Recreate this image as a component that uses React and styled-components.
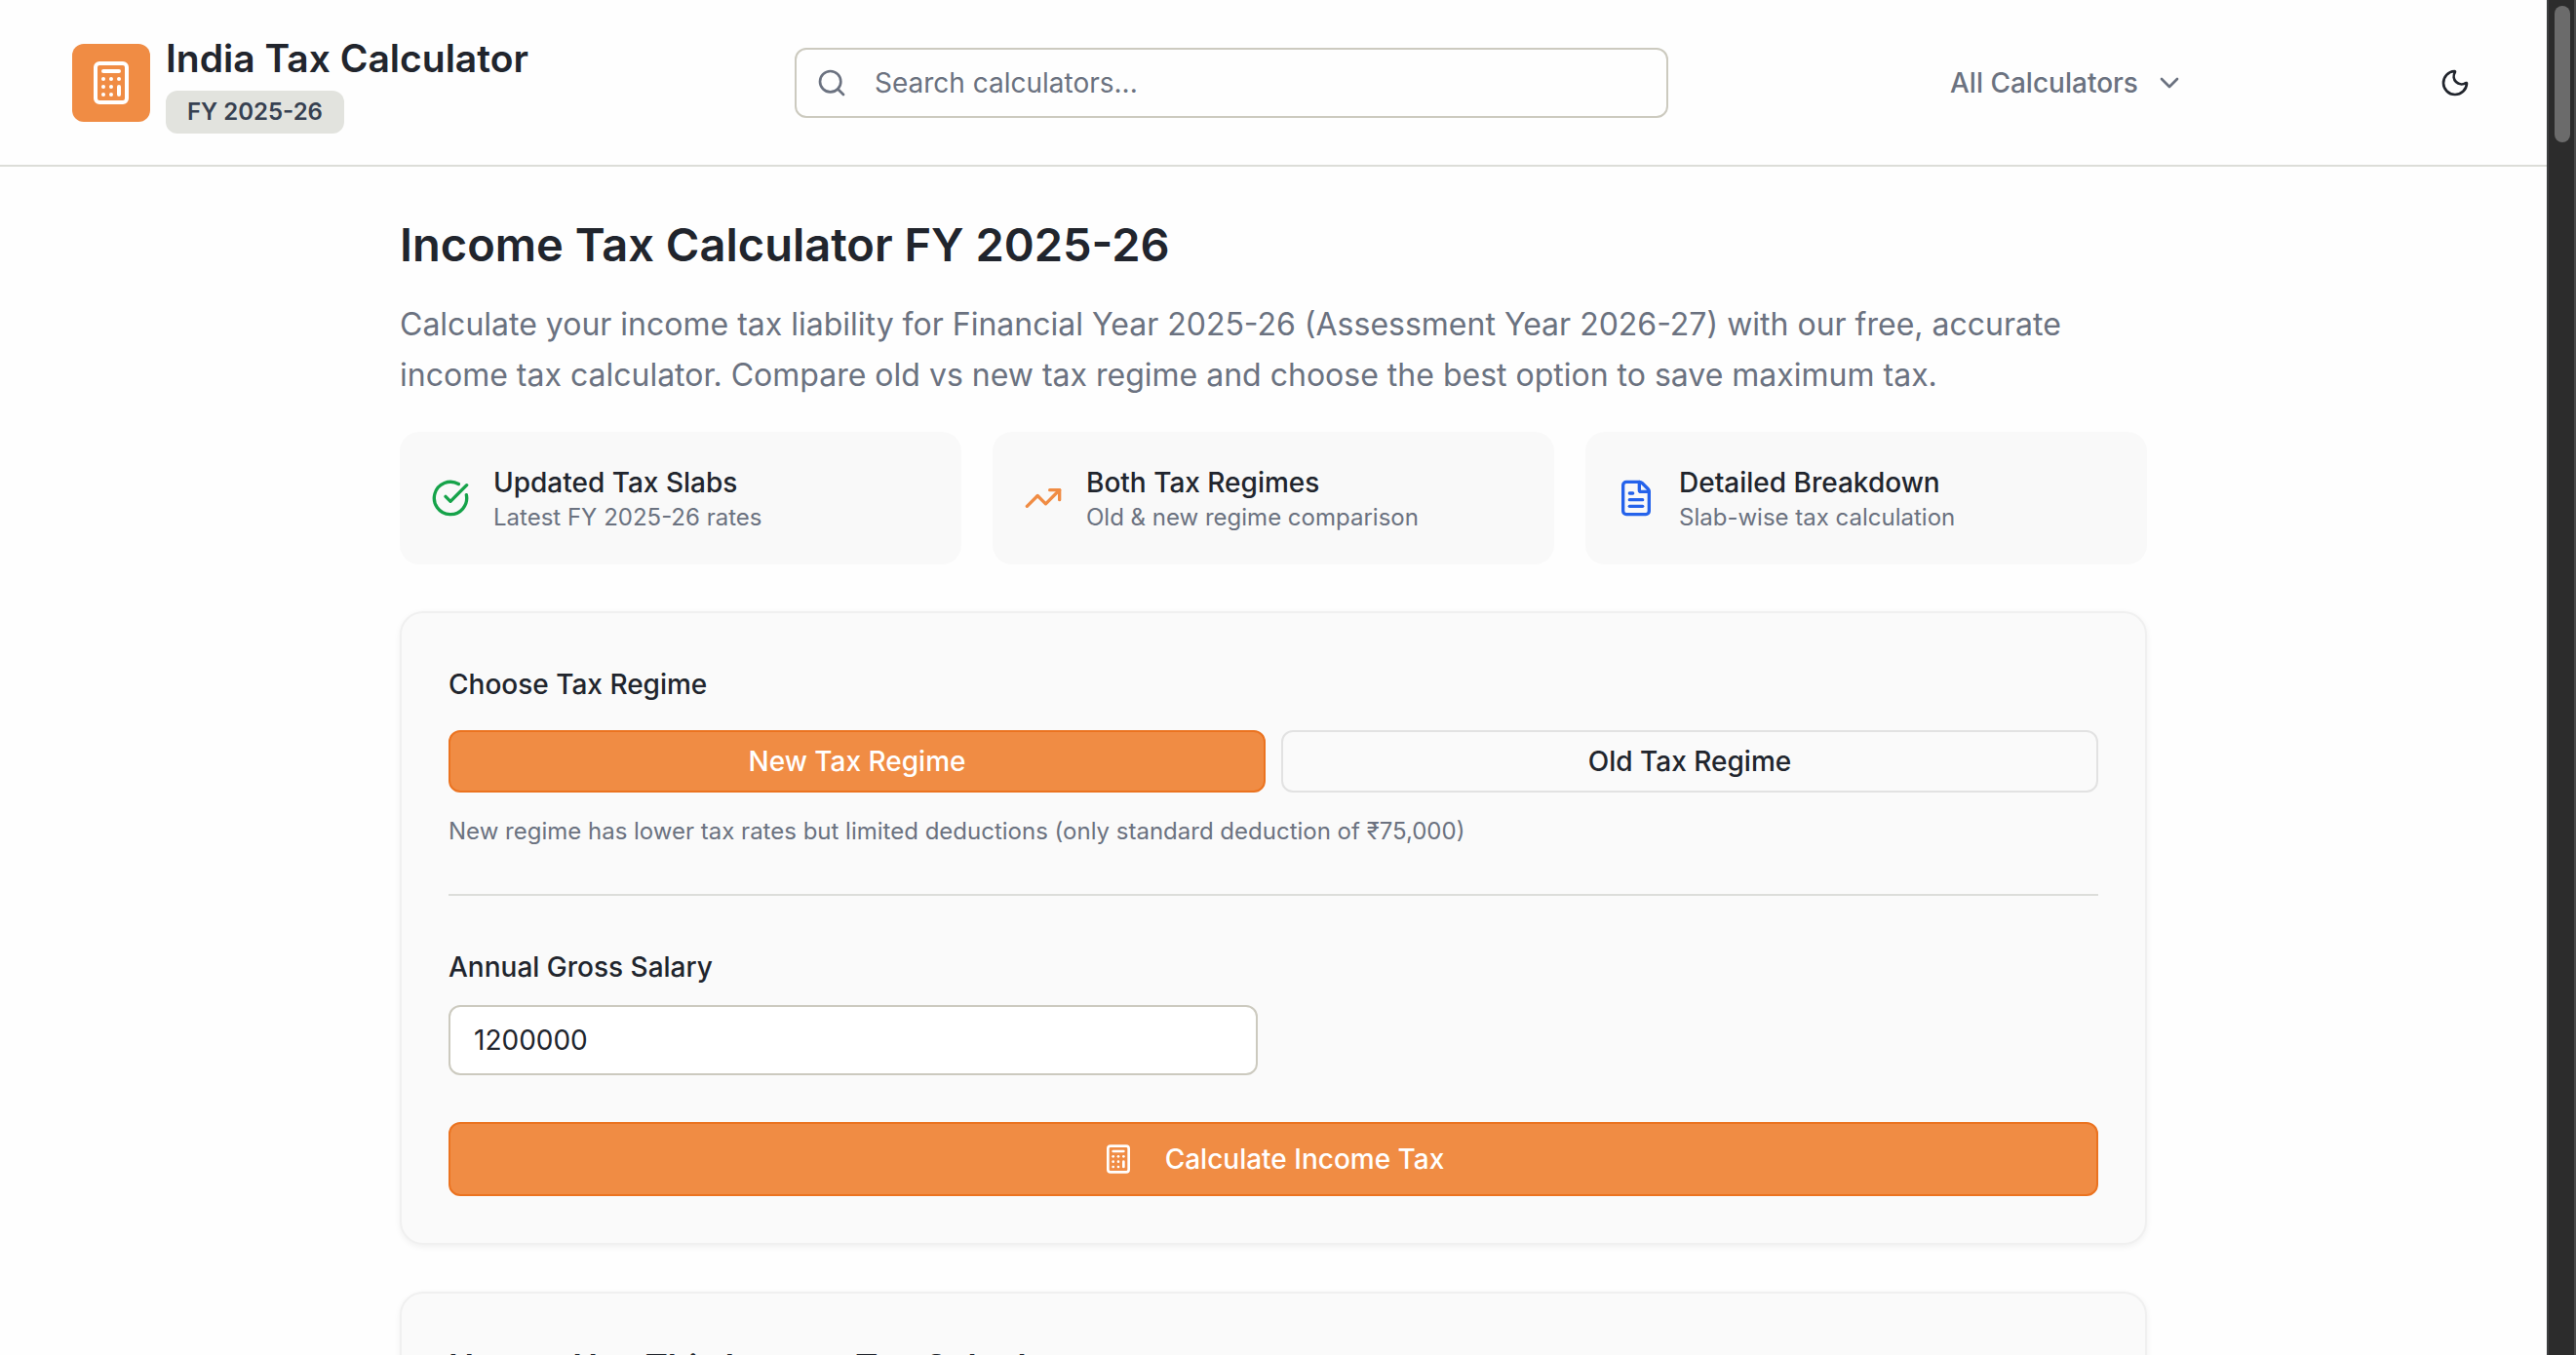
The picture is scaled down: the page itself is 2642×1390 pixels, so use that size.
import React, { useState } from 'react';
import styled, { createGlobalStyle } from 'styled-components';
import {
  Calculator,
  ChevronDown,
  CircleCheckBig,
  FileText,
  Moon,
  Search,
  TrendingUp,
} from 'lucide-react';

const GlobalStyle = createGlobalStyle`
  * {
    box-sizing: border-box;
  }

  html,
  body,
  #root {
    height: 100%;
  }

  body {
    margin: 0;
    overflow: hidden;
    background: #fefefe;
    color: #21252d;
    font-family: Inter, "Liberation Sans", sans-serif;
    font-size: 28px;
  }

  h1,
  h2,
  h3,
  p {
    margin: 0;
  }

  button,
  input {
    font: inherit;
    color: inherit;
  }
`;

const Window = styled.div`
  display: flex;
  height: 100%;
`;

const Page = styled.div`
  flex: 1;
  min-width: 0;
  overflow: hidden;
`;

const ScrollTrack = styled.div`
  flex: 0 0 30px;
  padding: 6px 4px 0 6px;
  background: #2c2c2c;
  border-left: 2px solid #3d3f40;
  border-right: 2px solid #4a4a4a;
`;

const ScrollThumb = styled.div`
  height: 140px;
  border-radius: 8px;
  background: #6b6b6b;
`;

const Header = styled.header`
  display: flex;
  align-items: center;
  justify-content: space-between;
  padding: 33px 74px 32px;
  border-bottom: 2px solid #dcddd8;
`;

const Brand = styled.a`
  display: flex;
  align-items: center;
  gap: 16px;
  color: inherit;
  text-decoration: none;
`;

const Logo = styled.span`
  display: flex;
  align-items: center;
  justify-content: center;
  width: 80px;
  height: 80px;
  border-radius: 12px;
  background: #f08c44;
  color: #fff;
`;

const BrandText = styled.span`
  display: flex;
  flex-direction: column;
  align-items: flex-start;
  gap: 6px;
`;

const BrandName = styled.span`
  font-size: 39px;
  font-weight: 600;
  line-height: 54px;
`;

const Badge = styled.span`
  padding: 0 22px;
  border-radius: 12px;
  background: #e2e3de;
  color: #374151;
  font-size: 24px;
  font-weight: 600;
  line-height: 44px;
`;

const SearchBox = styled.label`
  display: flex;
  align-items: center;
  flex: 0 1 896px;
  gap: 28px;
  height: 72px;
  padding: 0 20px;
  border: 2px solid #cccabf;
  border-radius: 12px;
  background: #fefefe;
  color: #6b7280;
`;

const SearchInput = styled.input`
  flex: 1;
  min-width: 0;
  padding: 0;
  border: 0;
  outline: 0;
  background: none;

  &::placeholder {
    color: #6b7280;
    opacity: 1;
  }
`;

const HeaderActions = styled.div`
  display: flex;
  align-items: center;
  justify-content: space-between;
  flex: 0 1 554px;
`;

const MenuButton = styled.button`
  display: flex;
  align-items: center;
  gap: 16px;
  padding: 16px;
  border: 0;
  background: none;
  color: #6b7280;
  font-weight: 500;
  cursor: pointer;
`;

const IconButton = styled.button`
  display: flex;
  padding: 4px;
  border: 0;
  background: none;
  cursor: pointer;
`;

const Main = styled.main`
  max-width: 1792px;
  margin: 0 auto;
  padding: 48px 0;
`;

const Title = styled.h1`
  margin-bottom: 24px;
  font-size: 47px;
  font-weight: 600;
  line-height: 64px;
`;

const Lead = styled.p`
  margin-bottom: 32px;
  color: #6b7280;
  font-size: 32px;
  line-height: 52px;
`;

const Features = styled.section`
  display: grid;
  grid-template-columns: repeat(3, 1fr);
  gap: 32px;
  margin-bottom: 48px;
`;

const Feature = styled.div`
  display: flex;
  align-items: center;
  gap: 24px;
  padding: 32px;
  border-radius: 20px;
  background: #f9f9f9;

  svg {
    color: ${props => props.$color};
  }
`;

const FeatureTitle = styled.h3`
  font-size: 28px;
  font-weight: 500;
  line-height: 40px;
`;

const FeatureText = styled.p`
  color: #6b7280;
  font-size: 24px;
  line-height: 32px;
`;

const Card = styled.section`
  margin-bottom: 48px;
  padding: 48px;
  border: 2px solid #f0f0f0;
  border-radius: 24px;
  background: #fafafa;
  box-shadow: 0 2px 6px rgba(0, 0, 0, 0.06);
`;

const Legend = styled.h2`
  margin-bottom: 22px;
  font-size: 28px;
  font-weight: 500;
  line-height: 50px;
`;

const Choices = styled.div`
  display: grid;
  grid-template-columns: 1fr 1fr;
  gap: 16px;
`;

const Button = styled.button`
  display: flex;
  align-items: center;
  justify-content: center;
  gap: 32px;
  width: 100%;
  height: ${props => (props.$large ? 76 : 64)}px;
  border: 2px solid ${props => (props.$primary ? '#eb7320' : '#e2e2e2')};
  border-radius: 12px;
  background: ${props => (props.$primary ? '#f08c44' : '#fafafa')};
  color: ${props => (props.$primary ? '#fff' : '#21252d')};
  font-weight: 500;
  cursor: pointer;
`;

const Hint = styled.p`
  margin-top: 16px;
  color: #6b7280;
  font-size: 24px;
  line-height: 48px;
`;

const Divider = styled.hr`
  margin: 40px 0 48px;
  border: 0;
  border-top: 2px solid #dcddda;
`;

const Fields = styled.div`
  display: grid;
  grid-template-columns: 1fr 1fr;
  gap: 32px;
  margin-bottom: 48px;
`;

const Field = styled.div`
  display: flex;
  flex-direction: column;
  gap: 14px;
`;

const FieldLabel = styled.label`
  font-weight: 500;
  line-height: 50px;
`;

const TextInput = styled.input`
  height: 72px;
  padding: 0 24px;
  border: 2px solid #cccabf;
  border-radius: 12px;
  background: #fff;
`;

const CardTitle = styled.h2`
  font-size: 35px;
  font-weight: 600;
  line-height: 54px;
`;

const features = [
  { icon: CircleCheckBig, color: '#16a34a', title: 'Updated Tax Slabs', text: 'Latest FY 2025-26 rates' },
  { icon: TrendingUp, color: '#f08c44', title: 'Both Tax Regimes', text: 'Old & new regime comparison' },
  { icon: FileText, color: '#2563eb', title: 'Detailed Breakdown', text: 'Slab-wise tax calculation' },
];

const hints = {
  new: 'New regime has lower tax rates but limited deductions (only standard deduction of ₹75,000)',
  old: 'Old regime has higher tax rates but allows more deductions',
};

const App = () => {
  const [regime, setRegime] = useState('new');
  const [salary, setSalary] = useState('1200000');

  return (
    <Window>
      <GlobalStyle />
      <Page>
        <Header>
          <Brand href="#">
            <Logo>
              <Calculator size={48} />
            </Logo>
            <BrandText>
              <BrandName>India Tax Calculator</BrandName>
              <Badge>FY 2025-26</Badge>
            </BrandText>
          </Brand>
          <SearchBox>
            <Search size={32} />
            <SearchInput type="text" aria-label="Search calculators" placeholder="Search calculators..." />
          </SearchBox>
          <HeaderActions>
            <MenuButton type="button">
              All Calculators
              <ChevronDown size={32} />
            </MenuButton>
            <IconButton type="button" aria-label="Toggle theme">
              <Moon size={32} />
            </IconButton>
          </HeaderActions>
        </Header>

        <Main>
          <Title>Income Tax Calculator FY 2025-26</Title>
          <Lead>
            Calculate your income tax liability for Financial Year 2025-26 (Assessment Year 2026-27) with our
            free, accurate income tax calculator. Compare old vs new tax regime and choose the best option to
            save maximum tax.
          </Lead>

          <Features>
            {features.map(({ icon: Icon, color, title, text }) => (
              <Feature key={title} $color={color}>
                <Icon size={40} />
                <div>
                  <FeatureTitle>{title}</FeatureTitle>
                  <FeatureText>{text}</FeatureText>
                </div>
              </Feature>
            ))}
          </Features>

          <Card>
            <Legend>Choose Tax Regime</Legend>
            <Choices>
              <Button type="button" $primary={regime === 'new'} onClick={() => setRegime('new')}>
                New Tax Regime
              </Button>
              <Button type="button" $primary={regime === 'old'} onClick={() => setRegime('old')}>
                Old Tax Regime
              </Button>
            </Choices>
            <Hint>{hints[regime]}</Hint>
            <Divider />
            <Fields>
              <Field>
                <FieldLabel htmlFor="salary">Annual Gross Salary</FieldLabel>
                <TextInput
                  id="salary"
                  type="text"
                  inputMode="numeric"
                  value={salary}
                  onChange={e => setSalary(e.target.value)}
                />
              </Field>
            </Fields>
            <Button type="button" $primary $large>
              <Calculator size={32} />
              Calculate Income Tax
            </Button>
          </Card>

          <Card>
            <CardTitle>How to Use This Income Tax Calculator</CardTitle>
          </Card>
        </Main>
      </Page>
      <ScrollTrack>
        <ScrollThumb />
      </ScrollTrack>
    </Window>
  );
};

export default App;
